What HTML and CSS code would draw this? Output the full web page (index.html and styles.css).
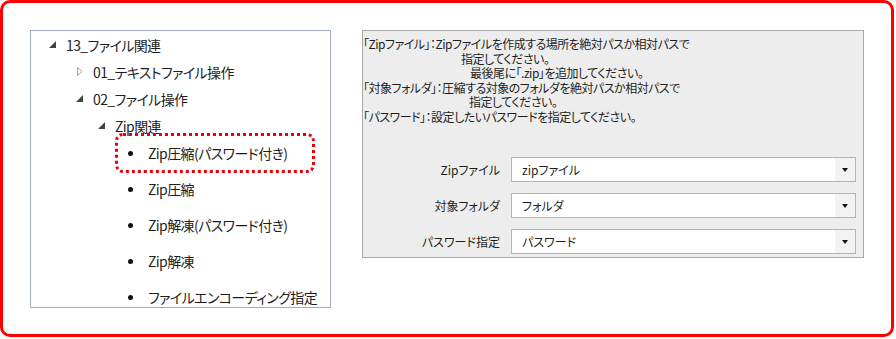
FILE: index.html
```html
<!DOCTYPE html>
<html lang="ja">
<head>
    <meta charset="UTF-8">
    <title>Zip圧縮(パスワード付き)</title>
    <link rel="stylesheet" href="styles.css">
</head>
<body>
    <div class="frame">
        <div class="tree">
            <div class="node lv0">
                <svg class="tw" width="7" height="7" viewBox="0 0 7 7"><polygon points="7,0 7,7 0,7" fill="#444"/></svg>
                <span>13_ファイル関連</span>
            </div>
            <div class="node lv1">
                <svg class="tw" width="7" height="9" viewBox="0 0 7 9"><polygon points="1.5,0.5 6,4.5 1.5,8.5" fill="none" stroke="#a0a0a0"/></svg>
                <span>01_テキストファイル操作</span>
            </div>
            <div class="node lv1">
                <svg class="tw" width="7" height="7" viewBox="0 0 7 7"><polygon points="7,0 7,7 0,7" fill="#444"/></svg>
                <span>02_ファイル操作</span>
            </div>
            <div class="node lv2">
                <svg class="tw" width="7" height="7" viewBox="0 0 7 7"><polygon points="7,0 7,7 0,7" fill="#444"/></svg>
                <span>Zip関連</span>
            </div>
            <ul class="leaves">
                <li class="leaf marked">Zip圧縮(パスワード付き)</li>
                <li class="leaf">Zip圧縮</li>
                <li class="leaf">Zip解凍(パスワード付き)</li>
                <li class="leaf">Zip解凍</li>
                <li class="leaf">ファイルエンコーディング指定</li>
            </ul>
        </div>

        <div class="props">
            <div class="help">
                <p>「Zipファイル」：Zipファイルを作成する場所を絶対パスか相対パスで</p>
                <p class="in1">指定してください。</p>
                <p class="in2">最後尾に「.zip」を追加してください。</p>
                <p>「対象フォルダ」：圧縮する対象のフォルダを絶対パスか相対パスで</p>
                <p class="in3">指定してください。</p>
                <p>「パスワード」：設定したいパスワードを指定してください。</p>
            </div>
            <div class="form">
                <div class="row">
                    <label>Zipファイル</label>
                    <div class="combo"><span class="val">zipファイル</span><span class="arrow"></span></div>
                </div>
                <div class="row">
                    <label>対象フォルダ</label>
                    <div class="combo"><span class="val">フォルダ</span><span class="arrow"></span></div>
                </div>
                <div class="row">
                    <label>パスワード指定</label>
                    <div class="combo"><span class="val">パスワード</span><span class="arrow"></span></div>
                </div>
            </div>
        </div>
    </div>
</body>
</html>
```

FILE: styles.css
```css
body {
    margin: 0;
    background: #fff;
    font-family: "Noto Sans CJK JP", "Noto Sans", sans-serif;
    font-feature-settings: "palt";
    color: #1e1e1e;
}
.frame {
    width: 894px;
    height: 337px;
    box-sizing: border-box;
    border: 3px solid #ff0000;
    border-radius: 10px;
    padding: 27px 0 0 27px;
    display: flex;
    align-items: flex-start;
}

/* tree */
.tree {
    width: 301px;
    height: 278px;
    box-sizing: border-box;
    border: 1px solid #a3aac4;
    overflow: hidden;
    font-size: 14px;
    letter-spacing: -0.6px;
}
.node {
    height: 27px;
    display: flex;
    align-items: center;
    gap: 10px;
}
.lv0 { padding-left: 18px; }
.lv1 { padding-left: 45px; }
.lv2 { padding-left: 67px; }
.tw { flex: none; }

.leaves {
    list-style: none;
    margin: -4px 0 0 0;
    padding: 0;
}
.leaf {
    height: 36px;
    margin-left: 86px;
    padding-left: 11px;
    display: flex;
    align-items: center;
    gap: 15px;
    box-sizing: border-box;
}
.leaf::before {
    content: "";
    width: 5px;
    height: 5px;
    border-radius: 50%;
    background: #111;
    flex: none;
}
.marked {
    width: 196px;
    outline: 3px dotted #e8000b;
    outline-offset: -1px;
    border-radius: 6px;
}

/* properties */
.props {
    margin-left: 31px;
    width: 502px;
    height: 228px;
    box-sizing: border-box;
    border: 1px solid #a8a8a8;
    background: #ededed;
    font-size: 12px;
}
.help {
    padding-top: 6px;
    letter-spacing: -0.5px;
}
.help p {
    margin: 0;
    line-height: 14.5px;
    white-space: nowrap;
}
.help .in1 { padding-left: 98px; }
.help .in2 { padding-left: 107px; }
.help .in3 { padding-left: 106px; }

.form {
    margin-top: 33px;
    display: flex;
    flex-direction: column;
    gap: 11px;
}
.row {
    display: flex;
    align-items: center;
    gap: 11px;
}
.row label {
    width: 137px;
    text-align: right;
}
.combo {
    width: 345px;
    height: 25px;
    box-sizing: border-box;
    border: 1px solid #b5b5b5;
    background: #fff;
    display: flex;
    align-items: center;
}
.val {
    flex: 1;
    padding-left: 10px;
}
.arrow {
    width: 20px;
    height: 100%;
    background: #f3f3f3;
    position: relative;
}
.arrow::after {
    content: "";
    position: absolute;
    left: 7px;
    top: 10px;
    border-left: 3px solid transparent;
    border-right: 3px solid transparent;
    border-top: 4px solid #111;
}
```
